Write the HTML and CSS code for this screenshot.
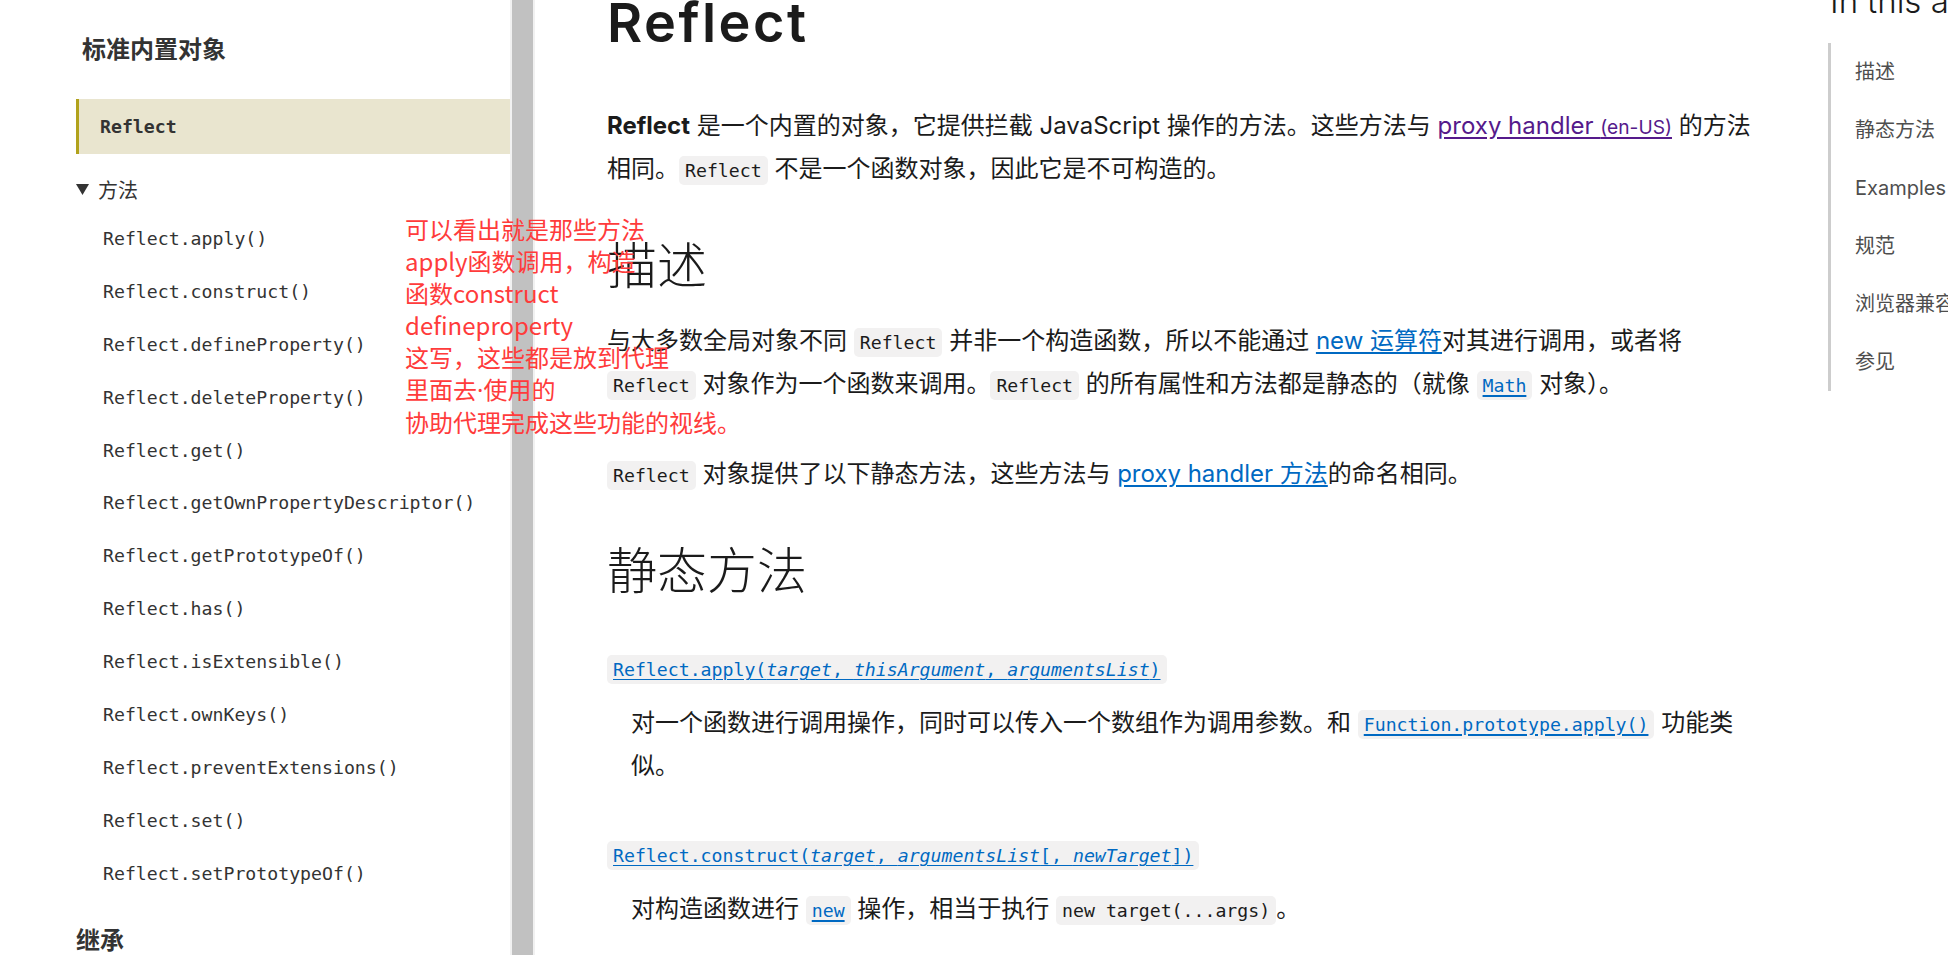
FILE: index.html
```html
<!DOCTYPE html>
<html lang="zh-CN">
<head>
<meta charset="utf-8">
<title>Reflect</title>
<link rel="stylesheet" href="styles.css">
</head>
<body>
<div class="page">
  <aside class="sidebar">
    <h4 class="side-title">标准内置对象</h4>
    <div class="side-current"><span class="mono-bold">Reflect</span></div>
    <div class="side-group">
      <svg class="tri" width="13" height="11" viewBox="0 0 13 11"><polygon points="0,0 13,0 6.5,11" fill="#333"/></svg>
      <span>方法</span>
    </div>
    <ul class="side-list">
      <li>Reflect.apply()</li>
      <li>Reflect.construct()</li>
      <li>Reflect.defineProperty()</li>
      <li>Reflect.deleteProperty()</li>
      <li>Reflect.get()</li>
      <li>Reflect.getOwnPropertyDescriptor()</li>
      <li>Reflect.getPrototypeOf()</li>
      <li>Reflect.has()</li>
      <li>Reflect.isExtensible()</li>
      <li>Reflect.ownKeys()</li>
      <li>Reflect.preventExtensions()</li>
      <li>Reflect.set()</li>
      <li>Reflect.setPrototypeOf()</li>
    </ul>
    <h4 class="side-title side-title-last">继承</h4>
  </aside>
  <div class="scrollbar"><div class="thumb"></div></div>
  <main class="content">
    <h1>Reflect</h1>
    <p><strong>Reflect</strong> 是一个内置的对象，它提供拦截 JavaScript 操作的方法。这些方法与 <a class="visited" href="#">proxy handler <span class="en">(en-US)</span></a> 的方法<br>相同。<code>Reflect</code> 不是一个函数对象，因此它是不可构造的。</p>
    <h2>描述</h2>
    <p>与大多数全局对象不同 <code>Reflect</code> 并非一个构造函数，所以不能通过 <a href="#">new 运算符</a>对其进行调用，或者将<br><code>Reflect</code> 对象作为一个函数来调用。<code>Reflect</code> 的所有属性和方法都是静态的（就像 <a href="#"><code>Math</code></a> 对象）。</p>
    <p><code>Reflect</code> 对象提供了以下静态方法，这些方法与 <a href="#">proxy handler 方法</a>的命名相同。</p>
    <h2 class="h2-methods">静态方法</h2>
    <dl>
      <dt><a href="#"><code>Reflect.apply(<em>target</em>, <em>thisArgument</em>, <em>argumentsList</em>)</code></a></dt>
      <dd>对一个函数进行调用操作，同时可以传入一个数组作为调用参数。和 <a href="#"><code>Function.prototype.apply()</code></a> 功能类<br>似。</dd>
      <dt><a href="#"><code>Reflect.construct(<em>target</em>, <em>argumentsList</em>[, <em>newTarget</em>])</code></a></dt>
      <dd>对构造函数进行 <a href="#"><code>new</code></a> 操作，相当于执行 <code>new target(...args)</code>。</dd>
    </dl>
  </main>
  <nav class="toc">
    <h2 class="toc-title">In this article</h2>
    <ul class="toc-list">
      <li>描述</li>
      <li>静态方法</li>
      <li>Examples</li>
      <li>规范</li>
      <li>浏览器兼容性</li>
      <li>参见</li>
    </ul>
  </nav>
</div>
<div class="note">可以看出就是那些方法<br>apply函数调用，构造<br>函数construct<br>defineproperty<br>这写，这些都是放到代理<br>里面去<span class="dot">·</span>使用的<br>协助代理完成这些功能的视线。</div>
</body>
</html>
```

FILE: styles.css
```css
html, body {
  margin: 0;
  padding: 0;
}
body {
  width: 1948px;
  height: 955px;
  overflow: hidden;
  position: relative;
  background: #fff;
  color: #1b1b1b;
  font-family: Inter, "Noto Sans CJK SC", sans-serif;
}
.page {
  display: flex;
  height: 955px;
}

/* left sidebar */
.sidebar {
  width: 510px;
  flex: none;
  box-sizing: border-box;
  padding-left: 76px;
  color: #333;
}
.side-title {
  margin: 24px 0 27px;
  padding-left: 6px;
  height: 48px;
  line-height: 48px;
  font-size: 24px;
  font-weight: 700;
  color: #333;
  font-family: "Noto Sans CJK SC", sans-serif;
}
.side-title-last {
  margin: 14px 0 0;
  padding-left: 0;
}
.side-current {
  height: 55px;
  box-sizing: border-box;
  border-left: 3px solid #b1a21c;
  background: #e9e5cf;
  padding-left: 21px;
  display: flex;
  align-items: center;
  margin-bottom: 11px;
}
.mono-bold {
  font-family: "DejaVu Sans Mono", monospace;
  font-size: 18.2px;
  font-weight: 700;
  color: #333;
}
.side-group {
  height: 48px;
  display: flex;
  align-items: center;
  gap: 9px;
  font-size: 20px;
  font-family: "Noto Sans CJK SC", sans-serif;
}
.tri {
  display: block;
}
.side-list {
  list-style: none;
  margin: 0;
  padding: 0 0 0 27px;
}
.side-list li {
  height: 52.9px;
  line-height: 52.9px;
  font-family: "DejaVu Sans Mono", monospace;
  font-size: 18.2px;
  color: #333;
  white-space: nowrap;
}

/* fake scrollbar */
.scrollbar {
  width: 25px;
  flex: none;
  background: #f1f1f1;
  display: flex;
  justify-content: center;
}
.thumb {
  width: 21px;
  height: 100%;
  background: #c1c1c1;
}

/* main content */
.content {
  flex: none;
  width: 1190px;
  margin-left: 72px;
}
.content h1 {
  margin: -10px 0 49px;
  font-size: 54px;
  line-height: 65px;
  font-weight: 600;
  letter-spacing: 2.5px;
}
.content p {
  margin: 0 0 47px;
  font-size: 24px;
  line-height: 43px;
}
.content h2 {
  margin: 0 0 24px;
  font-size: 50px;
  line-height: 58px;
  font-weight: 300;
}
.content h2.h2-methods {
  margin-top: 5px;
}
.content dl {
  margin: 0;
  padding-top: 25px;
}
.content dt {
  height: 43px;
  line-height: 43px;
}
.content dd {
  margin: 9px 0 48px 24px;
  font-size: 24px;
  line-height: 43px;
}
code {
  font-family: "DejaVu Sans Mono", monospace;
  font-size: 18.2px;
  line-height: 1;
  background: #f2f1f1;
  border-radius: 5px;
  padding: 4px 6px;
}
a {
  color: #0069c2;
  text-decoration: underline;
  text-underline-offset: 3px;
}
a code {
  color: #0069c2;
}
a.visited {
  color: #551a8b;
}
.en {
  font-size: 0.8em;
  line-height: 1;
}

/* table of contents */
.toc {
  flex: none;
  width: 300px;
  margin-left: 31px;
}
.toc-title {
  margin: -19px 0 22px 2px;
  font-size: 33px;
  line-height: 40px;
  font-weight: 300;
  white-space: nowrap;
  color: #1b1b1b;
}
.toc-list {
  list-style: none;
  margin: 0;
  padding: 0 0 0 24px;
  border-left: 3px solid #cdcdcd;
}
.toc-list li {
  height: 58px;
  line-height: 58px;
  font-size: 20px;
  color: #4e4e4e;
  white-space: nowrap;
}

/* red annotation overlay */
.note {
  position: absolute;
  left: 405px;
  top: 213px;
  font-family: "Noto Sans CJK SC", sans-serif;
  font-size: 24px;
  line-height: 32px;
  color: #ff3b3b;
  white-space: nowrap;
}
.dot {
  font-family: "Noto Sans", sans-serif;
}
```
